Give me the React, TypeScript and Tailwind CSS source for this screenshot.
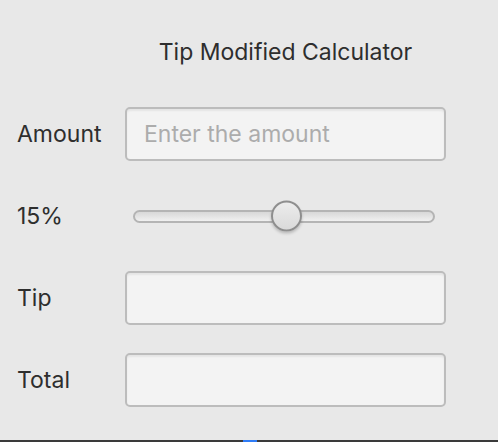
const Field = ({ placeholder }: { placeholder?: string }) => (
  <div className="h-[54px] w-[321px] rounded-[5px] border-2 border-[#bcbcbc] bg-[#f3f3f3] shadow-[inset_0_2px_2px_rgba(0,0,0,0.06)] flex items-center px-[17px]">
    {placeholder && <span className="text-[23px] text-[#acacac]">{placeholder}</span>}
  </div>
);

const Label = ({ children }: { children: string }) => (
  <div className="h-[54px] flex items-center text-[23px] text-[#2e2e2e]">{children}</div>
);

export default function App() {
  return (
    <div
      className="h-[442px] w-[498px] bg-[#e8e8e8] flex flex-col overflow-hidden"
      style={{ fontFamily: "Inter, 'Noto Sans', sans-serif" }}
    >
      <div className="flex-1 grid grid-cols-[108px_321px] auto-rows-[54px] gap-y-[28px] pl-[17px] pt-[25px]">
        <div />
        <div className="flex items-center justify-center text-[23px] text-[#2e2e2e]">Tip Modified Calculator</div>

        <Label>Amount</Label>
        <Field placeholder="Enter the amount" />

        <Label>15%</Label>
        <div className="flex items-center pl-[8px] pr-[11px]">
          <div className="relative w-full h-[13px] rounded-full border-2 border-[#b4b4b4] bg-gradient-to-b from-[#d8d8d8] to-[#f0f0f0]">
            <div className="absolute left-[136px] top-1/2 -translate-y-1/2 w-[31px] h-[31px] rounded-full border-2 border-[#8e8e8e] bg-gradient-to-b from-[#ececec] to-[#dadada] shadow-[0_2px_3px_rgba(0,0,0,0.2)]" />
          </div>
        </div>

        <Label>Tip</Label>
        <Field />

        <Label>Total</Label>
        <Field />
      </div>
      <div className="h-[2px] bg-[#3a3a3a] flex pl-[243px]">
        <div className="w-[14px] bg-[#2f7cf6]" />
      </div>
    </div>
  );
}
